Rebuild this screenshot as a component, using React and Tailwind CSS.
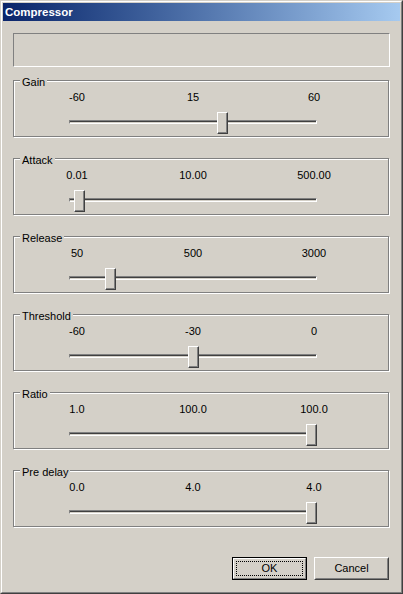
import React from "react";

const groups = [
  { label: "Gain", vals: ["-60", "15", "60"], thumb: 217 },
  { label: "Attack", vals: ["0.01", "10.00", "500.00"], thumb: 74 },
  { label: "Release", vals: ["50", "500", "3000"], thumb: 105 },
  { label: "Threshold", vals: ["-60", "-30", "0"], thumb: 188 },
  { label: "Ratio", vals: ["1.0", "100.0", "100.0"], thumb: 306 },
  { label: "Pre delay", vals: ["0.0", "4.0", "4.0"], thumb: 306 },
];

function Group({ label, vals, thumb }) {
  return (
    <div className="relative h-[57px] w-[376px] border border-[#808080] shadow-[inset_1px_1px_0_#fff,1px_1px_0_#fff]">
      <span className="absolute left-[6px] top-[-5px] bg-[#d4d0c8] px-[2px] leading-[13px]">
        {label}
      </span>
      <div className="mt-[10px] flex h-[13px] leading-[13px]">
        <span className="ml-[43px] w-[40px] text-center">{vals[0]}</span>
        <span className="ml-[76px] w-[40px] text-center">{vals[1]}</span>
        <span className="ml-[81px] w-[40px] text-center">{vals[2]}</span>
      </div>
      <div className="relative ml-[55px] mt-[8px] h-[22px] w-[248px] pt-[8px]">
        <div className="h-[4px] border border-t-[#808080] border-l-[#808080] border-b-white border-r-white">
          <div className="h-[2px] border-t border-[#404040]" />
        </div>
        <div
          className="absolute top-0 h-[22px] w-[11px] border border-t-white border-l-white border-b-[#404040] border-r-[#404040] bg-[#d4d0c8]"
          style={{ left: thumb - 69 }}
        >
          <div className="h-full w-full border-b border-r border-[#808080]" />
        </div>
      </div>
    </div>
  );
}

export default function App() {
  return (
    <div
      className="h-[594px] w-[403px] border border-t-[#d4d0c8] border-l-[#d4d0c8] border-b-[#404040] border-r-[#404040] bg-[#d4d0c8] text-[11px] text-black"
      style={{ fontFamily: '"Liberation Sans", Arial, sans-serif' }}
    >
      <div className="h-full w-full border border-t-white border-l-white border-b-[#808080] border-r-[#808080] p-[1px]">
        <div className="flex h-[18px] items-center bg-gradient-to-r from-[#0a246a] to-[#a6caf0] pl-[2px] text-[11.5px] font-bold leading-[18px] text-white">
          Compressor
        </div>
        <div className="flex flex-col px-[10px]">
          <div className="mt-[12px] h-[34px] w-[377px] border border-t-[#808080] border-l-[#808080] border-b-white border-r-white" />
          <div className="mt-[13px] flex flex-col gap-[21px]">
            {groups.map((g) => (
              <Group key={g.label} {...g} />
            ))}
          </div>
          <div className="mt-[30px] flex justify-end gap-[7px] pr-[1px]">
            <button className="h-[23px] w-[75px] border border-black p-0">
              <div className="h-full w-full border border-t-white border-l-white border-b-[#808080] border-r-[#808080] p-[2px]">
                <div className="flex h-full w-full items-center justify-center border border-dotted border-black leading-[13px]">
                  OK
                </div>
              </div>
            </button>
            <button className="h-[23px] w-[75px] border border-t-white border-l-white border-b-[#404040] border-r-[#404040] p-0">
              <div className="flex h-full w-full items-center justify-center border border-t-[#d4d0c8] border-l-[#d4d0c8] border-b-[#808080] border-r-[#808080] leading-[13px]">
                Cancel
              </div>
            </button>
          </div>
        </div>
      </div>
    </div>
  );
}
